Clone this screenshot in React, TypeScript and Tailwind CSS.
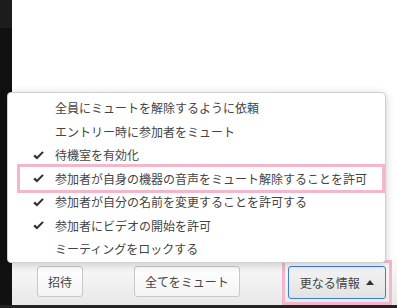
import React from 'react';

const items = [
  { label: '全員にミュートを解除するように依頼', checked: false },
  { label: 'エントリー時に参加者をミュート', checked: false },
  { label: '待機室を有効化', checked: true },
  { label: '参加者が自身の機器の音声をミュート解除することを許可', checked: true, highlight: true },
  { label: '参加者が自分の名前を変更することを許可する', checked: true },
  { label: '参加者にビデオの開始を許可', checked: true },
  { label: 'ミーティングをロックする', checked: false },
];

const font = { fontFamily: '"Noto Sans CJK JP", "Noto Sans", sans-serif' };

const Check = () => (
  <svg width="11" height="9" viewBox="0 0 11 9">
    <path d="M0.3 5.2 L2 3.6 L4 5.6 L9.3 0.3 L10.8 1.6 L4 8.6 Z" fill="#333" />
  </svg>
);

export default function App() {
  return (
    <div className="relative w-[397px] h-[308px] overflow-hidden bg-[#222] flex flex-col" style={font}>
      <div className="flex h-[305px]">
        <div className="w-[12px] flex flex-col">
          <div className="h-[28px] bg-[#1c1c1c]" />
          <div className="flex-1 bg-[#111]" />
        </div>
        <div className="flex-1 flex flex-col">
          <div className="flex-1 bg-white" />
          <div className="h-[47px] bg-gradient-to-b from-[#fbfbfb] to-[#e8e8e8] flex items-start pt-[8px] text-[12px] text-[#444]">
            <button className="ml-[25px] h-[31px] px-[10px] rounded-[3px] border border-[#c8c8c8] bg-gradient-to-b from-white to-[#f4f4f4]">
              招待
            </button>
            <button className="ml-[51px] h-[31px] px-[10px] rounded-[3px] border border-[#c8c8c8] bg-gradient-to-b from-white to-[#f4f4f4]">
              全てをミュート
            </button>
            <div className="ml-[42px] -mt-[6px] p-[3px] border-[3px] border-[#f4b6cc] w-[110px] h-[45px] flex">
              <button className="flex-1 flex items-center justify-center gap-[6px] rounded-[3px] border border-[#3c7fd6] bg-gradient-to-b from-[#f4f4f4] to-[#e2e2e2]">
                更なる情報
                <svg width="8" height="5" viewBox="0 0 8 5"><path d="M0 5 L4 0 L8 5 Z" fill="#333" /></svg>
              </button>
            </div>
          </div>
        </div>
      </div>
      <div className="flex-1 bg-[#222]" />

      <div className="absolute left-[7px] top-[92px] w-[379px] h-[171px] bg-white border border-[#cfcfcf] rounded-[4px] shadow-[0_2px_8px_rgba(0,0,0,0.2)] pt-[3.5px] text-[12px] text-[#444]">
        {items.map((it) => (
          <div key={it.label} className="relative h-[23.5px] flex items-center">
            {it.highlight && (
              <div className="absolute left-[9px] right-[0px] -top-[3px] -bottom-[2px] border-[3px] border-[#f4b6cc]" />
            )}
            <span className="w-[47px] pl-[25px] flex items-center">{it.checked ? <Check /> : null}</span>
            <span className="leading-none whitespace-nowrap">{it.label}</span>
          </div>
        ))}
      </div>
    </div>
  );
}
